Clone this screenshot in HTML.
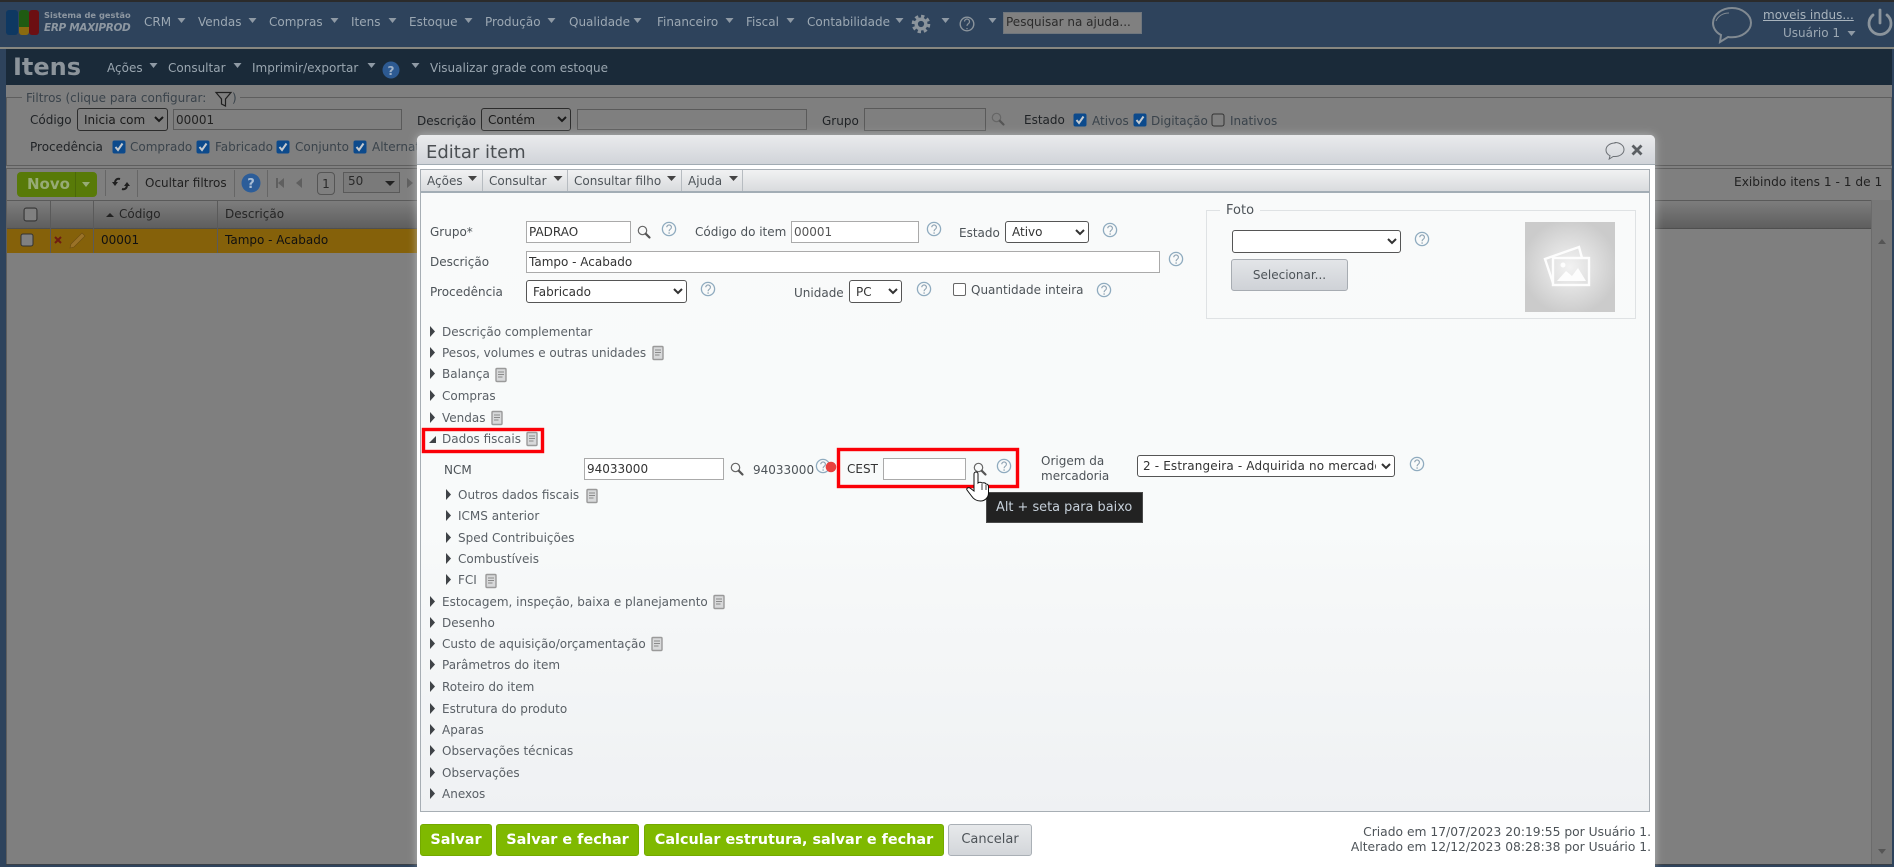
<!DOCTYPE html>
<html lang="pt"><head><meta charset="utf-8"><title>Itens</title>
<style>
html,body{margin:0;padding:0;width:1894px;height:867px;overflow:hidden;background:#2e435c}
*{box-sizing:border-box}
body{font:12px/16px "DejaVu Sans","Liberation Sans",sans-serif;color:#2a2a2a;position:relative}
.t{position:absolute;white-space:nowrap;line-height:16px}
.b{position:absolute}
.nav{color:#9ca8b3}
.tb{color:#9aa6b0}
.lab{color:#1f2225}
.dimc{color:#3a434b}
.m{color:#4d5358}
.tr{color:#5a6066}
svg{position:absolute;left:0;top:0;overflow:visible}
input,select{position:absolute;margin:0;font:12px "DejaVu Sans","Liberation Sans",sans-serif;color:#333;padding:0 2px}
input{background:#fff;border:1px solid #aaa;border-radius:0;outline:0}
select{background:#fff;border:1px solid #555;border-radius:3px;padding-left:2px}
.di{background:#7f7f7f;border:1px solid #5a5a5a;color:#222}
.ds{background:#7f7f7f;border:1px solid #2c2c2c;color:#1a1a1a}
.btn{position:absolute;top:824px;height:32px;background:#7fb900;border:1px solid #74a900;border-radius:3px;color:#fff;font:bold 14.400px/30px "DejaVu Sans",sans-serif;text-align:center;white-space:nowrap}
</style></head><body>
<svg width="0" height="0" style="position:absolute"><defs>
<symbol id="h" viewBox="-8 -8 16 16" overflow="visible"><circle r="6.6" fill="none" stroke="#8fabbf" stroke-width="1.3"/><path d="M-2.2-1.8a2.3 2.3 0 1 1 3.5 2C.5.8.1 1.100.1 2.200" fill="none" stroke="#8fa3b3" stroke-width="1.100"/><circle cx=".1" cy="4" r=".8" fill="#8fa3b3"/></symbol>
<symbol id="g" viewBox="-8 -8 16 16" overflow="visible"><circle cx="-1.500" cy="-1.500" r="4.200" fill="none" stroke="#666" stroke-width="1.200"/><path d="M1.800 1.800L5.500 5.500" stroke="#555" stroke-width="2.200" stroke-linecap="round"/></symbol>
<symbol id="n" viewBox="-6 -7 12 14" overflow="visible"><rect x="-5" y="-6.500" width="10" height="13" rx="1" fill="#d8d9da" stroke="#9a9a9a" stroke-width="1.400"/><path d="M-3-3H3M-3-.5H3M-3 2H1.500" stroke="#8a8a8a" stroke-width="1.100"/></symbol>
<symbol id="ck" viewBox="-7 -7 14 14" overflow="visible"><rect x="-6.500" y="-6.500" width="13" height="13" rx="2" fill="#0c4a8c"/><path d="M-3.500 0L-1 3L3.500-3.500" fill="none" stroke="#c4c9ce" stroke-width="2"/></symbol>
<symbol id="un" viewBox="-7 -7 14 14" overflow="visible"><rect x="-6" y="-6" width="12" height="12" rx="2" fill="#808080" stroke="#333" stroke-width="1"/></symbol>
</defs></svg>

<!-- NAV -->
<div class="b" style="left:0;top:0;width:1894px;height:2px;background:#2b2b2b"></div>
<div class="b" style="left:0;top:47px;width:1894px;height:2px;background:#878780"></div>
<div class="b" style="left:6px;top:10px;width:12px;height:25px;background:#0e3862;border-radius:3px"></div>
<div class="b" style="left:19px;top:10px;width:10px;height:17px;background:#1f5a12;border-radius:3px 3px 0 0"></div>
<div class="b" style="left:19px;top:27px;width:10px;height:8px;background:#8a6a10;border-radius:0 0 3px 3px"></div>
<div class="b" style="left:29px;top:10px;width:10px;height:25px;background:#6c0f12;border-radius:3px"></div>
<div class="t" style="left:44px;top:7px;font:bold 8.300px/16px 'DejaVu Sans',sans-serif;color:#8d97a1">Sistema de gestão</div>
<div class="t" style="left:44px;top:20px;font:italic bold 10.500px/16px 'DejaVu Sans',sans-serif;color:#8d97a1;letter-spacing:-.35px">ERP MAXIPROD</div>
<div class="t nav" style="left:144px;top:14px">CRM</div>
<div class="t nav" style="left:198px;top:14px">Vendas</div>
<div class="t nav" style="left:269px;top:14px">Compras</div>
<div class="t nav" style="left:351px;top:14px">Itens</div>
<div class="t nav" style="left:409px;top:14px">Estoque</div>
<div class="t nav" style="left:485px;top:14px">Produção</div>
<div class="t nav" style="left:569px;top:14px">Qualidade</div>
<div class="t nav" style="left:657px;top:14px">Financeiro</div>
<div class="t nav" style="left:746px;top:14px">Fiscal</div>
<div class="t nav" style="left:807px;top:14px">Contabilidade</div>
<div class="b" style="left:1003px;top:12px;width:139px;height:22px;background:#808080;border:1px solid #6f767d;color:#2b2b2b;padding-left:2px;line-height:19px;white-space:nowrap">Pesquisar na ajuda...</div>
<a class="t" style="left:1763px;top:7px;color:#a9b4bd;text-decoration:underline">moveis indus...</a>
<div class="t nav" style="left:1783px;top:25px">Usuário 1</div>

<!-- TITLE BAR -->
<div class="b" style="left:6px;top:49px;width:1886px;height:36px;background:#1a2a39"></div>
<div class="t" style="left:13px;top:55px;font:bold 24px/24px 'DejaVu Sans',sans-serif;color:#8c949b">Itens</div>
<div class="t tb" style="left:107px;top:60px">Ações</div>
<div class="t tb" style="left:168px;top:60px">Consultar</div>
<div class="t tb" style="left:252px;top:60px">Imprimir/exportar</div>
<div class="t tb" style="left:430px;top:60px">Visualizar grade com estoque</div>

<!-- CONTENT -->
<div class="b" style="left:6px;top:85px;width:1886px;height:779px;background:#7f7f7f"></div>
<div class="b" style="left:6px;top:864px;width:1886px;height:1px;background:#3a3f45"></div>
<div class="b" style="left:6px;top:97px;width:1886px;height:69px;border:1px solid #5e5e5e"></div>
<div class="b" style="left:22px;top:90px;width:218px;height:14px;background:#7f7f7f"></div>
<div class="t dimc" style="left:26px;top:90px">Filtros (clique para configurar:</div>
<div class="t dimc" style="left:232px;top:90px">)</div>
<div class="t lab" style="left:30px;top:112px">Código</div>
<select class="ds" style="left:77px;top:108px;width:91px;height:23px"><option>Inicia com</option></select>
<input class="di" style="left:173px;top:109px;width:229px;height:21px" value="00001">
<div class="t lab" style="left:417px;top:113px">Descrição</div>
<select class="ds" style="left:481px;top:108px;width:90px;height:23px"><option>Contém</option></select>
<input class="di" style="left:577px;top:109px;width:230px;height:21px">
<div class="t lab" style="left:822px;top:113px">Grupo</div>
<input class="di" style="left:864px;top:108px;width:122px;height:23px">
<div class="t lab" style="left:1024px;top:112px">Estado</div>
<div class="t dimc" style="left:1092px;top:113px">Ativos</div>
<div class="t dimc" style="left:1151px;top:113px">Digitação</div>
<div class="t dimc" style="left:1230px;top:113px">Inativos</div>
<div class="t lab" style="left:30px;top:139px">Procedência</div>
<div class="t dimc" style="left:130px;top:139px">Comprado</div>
<div class="t dimc" style="left:215px;top:139px">Fabricado</div>
<div class="t dimc" style="left:295px;top:139px">Conjunto</div>
<div class="t dimc" style="left:372px;top:139px">Alternativo</div>

<div class="b" style="left:6px;top:168px;width:1886px;height:696px;border:1px solid #5e5e5e;border-bottom:0"></div>
<div class="b" style="left:17px;top:172px;width:80px;height:25px;background:#587a08;border-radius:4px"></div>
<div class="b" style="left:75px;top:172px;width:1px;height:25px;background:#4b6808"></div>
<div class="t" style="left:27px;top:176px;font:bold 15px/16px 'DejaVu Sans',sans-serif;color:#97ab76">Novo</div>
<div class="b" style="left:105px;top:170px;width:1px;height:26px;background:#666"></div>
<div class="b" style="left:137px;top:170px;width:1px;height:27px;background:#666"></div>
<div class="b" style="left:234px;top:170px;width:1px;height:27px;background:#666"></div>
<div class="b" style="left:267px;top:170px;width:1px;height:27px;background:#666"></div>
<div class="t" style="left:145px;top:175px;color:#202020">Ocultar filtros</div>
<div class="b" style="left:317px;top:172px;width:18px;height:23px;border:1px solid #555;border-radius:4px;text-align:center;line-height:22px;font-size:12px">1</div>
<div class="b" style="left:343px;top:172px;width:57px;height:21px;border:1px solid #5a5a5a;background:#7a7a7a;line-height:17px;padding-left:4px">50</div>
<div class="t" style="left:1734px;top:174px;color:#222;font-size:12.200px">Exibindo itens 1 - 1 de 1</div>
<div class="b" style="left:7px;top:200px;width:1884px;height:29px;background:linear-gradient(#7d7d7d,#5e5e5e);border-top:1px solid #5a5a5a;border-bottom:1px solid #4f4f4f"></div>
<div class="b" style="left:7px;top:229px;width:500px;height:24px;background:#85610a"></div>
<div class="b" style="left:50px;top:200px;width:1px;height:53px;background:#5a5a5a"></div>
<div class="b" style="left:93px;top:200px;width:1px;height:53px;background:#5a5a5a"></div>
<div class="b" style="left:217px;top:200px;width:1px;height:53px;background:#5a5a5a"></div>
<div class="b" style="left:1871px;top:200px;width:21px;height:664px;background:#787878;border-left:1px solid #6b6b6b"></div>
<div class="t" style="left:119px;top:206px;color:#252525">Código</div>
<div class="t" style="left:225px;top:206px;color:#252525">Descrição</div>
<div class="t" style="left:101px;top:232px;color:#111">00001</div>
<div class="t" style="left:225px;top:232px;color:#111">Tampo - Acabado</div>

<!-- BACK ICONS -->
<svg width="1894" height="867">
<g fill="#8f9aa5"><path d="M177.500 18h8l-4 5zM248.500 18h8l-4 5zM330.500 18h8l-4 5zM388.500 18h8l-4 5zM464.500 18h8l-4 5zM547.500 18h8l-4 5zM633.500 18h8l-4 5zM725.500 18h8l-4 5zM786.500 18h8l-4 5zM895.500 18h8l-4 5zM941.500 18h8l-4 5zM988.500 18h8l-4 5zM1847.500 31h8l-4 5z"/>
<path d="M149.500 63h8l-4 5zM233.500 63h8l-4 5zM367.500 63h8l-4 5zM411.500 63h8l-4 5z"/></g>
<g fill="none" stroke="#8b949c"><circle cx="921" cy="24" r="7.800" stroke-width="3" stroke-dasharray="3.300 2.800"/><circle cx="921" cy="24" r="4.800" stroke-width="3.400"/><circle cx="967" cy="24" r="6.800" stroke-width="1.400"/></g>
<path d="M964.500 21.500a2.500 2.500 0 1 1 3.800 2.200c-.9.600-1.300 1-1.300 2.200M967 28v1.300" fill="none" stroke="#8b949c" stroke-width="1.200"/>
<path d="M1732 8c-10 0-19 6.500-19 15 0 5 3 9.500 8 12l-1 7 8-5c1.500.3 2.800.3 4 .3 10 0 19-6.500 19-14.500S1742 8 1732 8z" fill="none" stroke="#818a92" stroke-width="2"/>
<path d="M1716 21c2-5 7-8 13-8" fill="none" stroke="#818a92" stroke-width="1"/>
<path d="M1873 15a11 11 0 1 0 14 0M1880 10v13" fill="none" stroke="#8b949c" stroke-width="2.800" stroke-linecap="round"/>
<circle cx="391" cy="70" r="8.500" fill="#2d5a92"/><text x="391" y="75" text-anchor="middle" font-family="DejaVu Sans" font-weight="bold" font-size="12" fill="#9fb1c6">?</text>
<path d="M216 92.500h15l-5.500 6.500v7l-4-2v-5z" fill="none" stroke="#202020" stroke-width="1.200"/>
<use href="#g" x="990" y="111" width="16" height="16"/>
<use href="#ck" x="112" y="140" width="14" height="14"/><use href="#ck" x="196" y="140" width="14" height="14"/><use href="#ck" x="276" y="140" width="14" height="14"/><use href="#ck" x="353" y="140" width="14" height="14"/>
<use href="#ck" x="1073" y="113" width="14" height="14"/><use href="#ck" x="1133" y="113" width="14" height="14"/><use href="#un" x="1211" y="113" width="14" height="14"/>
<circle cx="251" cy="183" r="9.500" fill="#2c5d99"/><text x="251" y="188" text-anchor="middle" font-family="DejaVu Sans" font-weight="bold" font-size="13" fill="#a9bdd4">?</text>
<path d="M82 182h8l-4 5z" fill="#97ab76"/>
<path d="M115 183c0-3 2-5 5-4M127 185c0 3-2 5-5 4" fill="none" stroke="#1f1f1f" stroke-width="2"/><path d="M112 182h6l-3 4zM124 186h6l-3-4z" fill="#1f1f1f"/>
<g fill="#5f5f5f"><path d="M276 178h2v10h-2zM284 178v10l-6-5zM302 178v10l-6-5zM407 178v10l6-5z"/></g>
<path d="M385 181h10l-5 5z" fill="#222"/>
<use href="#un" x="23" y="207" width="15" height="15"/>
<use href="#un" x="20" y="233" width="14" height="14"/>
<path d="M106 217l4-4 4 4z" fill="#222"/>
<path d="M55 237l6 6M61 237l-6 6" stroke="#6f1c10" stroke-width="2"/>
<path d="M70 248l1-4 11-11 3 3-11 11z" fill="#9a7228" stroke="#6a4c10" stroke-width=".6"/>
<path d="M1878 244l4-5 4 5zM1878 849l4 5 4-5z" fill="#555"/>
</svg>

<!-- MODAL -->
<div class="b" style="left:417px;top:135px;width:1238px;height:732px;background:#fff;border-radius:5px 5px 0 0;box-shadow:0 0 9px rgba(215,218,220,.6)"></div>
<div class="b" style="left:417px;top:135px;width:1238px;height:30px;background:linear-gradient(#eaebed,#d1d4d9);border-bottom:1px solid #a2acb3;border-radius:5px 5px 0 0"></div>
<div class="t" style="left:426px;top:142px;font-size:18px;line-height:22px;color:#4b4f53">Editar item</div>
<div class="b" style="left:420px;top:169px;width:1230px;height:643px;border:1px solid #a7aeb4;background:linear-gradient(#f9fafa 0%,#f8fafa 55%,#eff1f3 100%)"></div>
<div class="b" style="left:421px;top:170px;width:1228px;height:23px;background:linear-gradient(#f1f2f3,#d9dbde);border-bottom:2px solid #a3adb5"></div>
<div class="b" style="left:482px;top:170px;width:1px;height:21px;background:#b7bcc1"></div>
<div class="b" style="left:567px;top:170px;width:1px;height:21px;background:#b7bcc1"></div>
<div class="b" style="left:681px;top:170px;width:1px;height:21px;background:#b7bcc1"></div>
<div class="b" style="left:742px;top:170px;width:1px;height:21px;background:#b7bcc1"></div>
<div class="t m" style="left:427px;top:173px">Ações</div>
<div class="t m" style="left:489px;top:173px">Consultar</div>
<div class="t m" style="left:574px;top:173px">Consultar filho</div>
<div class="t m" style="left:688px;top:173px">Ajuda</div>

<div class="t m" style="left:430px;top:224px">Grupo*</div>
<input style="left:526px;top:221px;width:105px;height:22px" value="PADRAO">
<div class="t m" style="left:695px;top:224px">Código do item</div>
<input style="left:791px;top:221px;width:128px;height:22px;color:#555" value="00001">
<div class="t m" style="left:959px;top:225px">Estado</div>
<select style="left:1005px;top:221px;width:84px;height:22px"><option>Ativo</option></select>
<div class="t m" style="left:430px;top:254px">Descrição</div>
<input style="left:526px;top:251px;width:634px;height:22px" value="Tampo - Acabado">
<div class="t m" style="left:430px;top:284px">Procedência</div>
<select style="left:526px;top:280px;width:161px;height:23px"><option>Fabricado</option></select>
<div class="t m" style="left:794px;top:285px">Unidade</div>
<select style="left:849px;top:280px;width:53px;height:23px"><option>PC</option></select>
<div class="b" style="left:953px;top:283px;width:13px;height:13px;border:1px solid #666;border-radius:2px;background:#fff"></div>
<div class="t m" style="left:971px;top:282px">Quantidade inteira</div>

<div class="b" style="left:1206px;top:210px;width:430px;height:109px;border:1px solid #dfe2e4"></div>
<div class="b" style="left:1220px;top:204px;width:40px;height:14px;background:#f9fafa"></div>
<div class="t m" style="left:1226px;top:203px;font-size:13px">Foto</div>
<select style="left:1232px;top:230px;width:169px;height:23px"><option></option></select>
<div class="b" style="left:1231px;top:259px;width:117px;height:32px;background:linear-gradient(#e3e5e8,#cfd2d7);border:1px solid #a7acb2;border-radius:3px;text-align:center;line-height:30px;color:#4d5358">Selecionar...</div>
<div class="b" style="left:1525px;top:222px;width:90px;height:90px;background:radial-gradient(circle at 50% 50%,#f2f2f2 0%,#dedede 40%,#cbcbcb 75%)"></div>

<!-- Tree -->
<div class="t tr" style="left:442px;top:324px">Descrição complementar</div>
<div class="t tr" style="left:442px;top:345px">Pesos, volumes e outras unidades</div>
<div class="t tr" style="left:442px;top:366px">Balança</div>
<div class="t tr" style="left:442px;top:388px">Compras</div>
<div class="t tr" style="left:442px;top:410px">Vendas</div>
<div class="t tr" style="left:442px;top:431px">Dados fiscais</div>
<div class="t m" style="left:444px;top:462px">NCM</div>
<input style="left:584px;top:458px;width:140px;height:22px" value="94033000">
<div class="t m" style="left:753px;top:462px">94033000</div>
<div class="t" style="left:847px;top:461px;color:#333">CEST</div>
<input style="left:883px;top:458px;width:83px;height:22px">
<div class="t m" style="left:1041px;top:453px">Origem da</div>
<div class="t m" style="left:1041px;top:468px">mercadoria</div>
<select style="left:1137px;top:455px;width:258px;height:22px;padding-left:1px;letter-spacing:.15px"><option>2 - Estrangeira - Adquirida no mercado interno</option></select>
<div class="t tr" style="left:458px;top:487px">Outros dados fiscais</div>
<div class="t tr" style="left:458px;top:508px">ICMS anterior</div>
<div class="t tr" style="left:458px;top:530px">Sped Contribuições</div>
<div class="t tr" style="left:458px;top:551px">Combustíveis</div>
<div class="t tr" style="left:458px;top:572px">FCI</div>
<div class="t tr" style="left:442px;top:594px">Estocagem, inspeção, baixa e planejamento</div>
<div class="t tr" style="left:442px;top:615px">Desenho</div>
<div class="t tr" style="left:442px;top:636px">Custo de aquisição/orçamentação</div>
<div class="t tr" style="left:442px;top:657px">Parâmetros do item</div>
<div class="t tr" style="left:442px;top:679px">Roteiro do item</div>
<div class="t tr" style="left:442px;top:701px">Estrutura do produto</div>
<div class="t tr" style="left:442px;top:722px">Aparas</div>
<div class="t tr" style="left:442px;top:743px">Observações técnicas</div>
<div class="t tr" style="left:442px;top:765px">Observações</div>
<div class="t tr" style="left:442px;top:786px">Anexos</div>

<div class="btn" style="left:420px;width:72px">Salvar</div>
<div class="btn" style="left:496px;width:143px">Salvar e fechar</div>
<div class="btn" style="left:644px;width:300px">Calcular estrutura, salvar e fechar</div>
<div class="btn" style="left:948px;width:84px;background:linear-gradient(#e7e9eb,#d3d6da);border-color:#aab0b6;color:#4d5358;font-weight:normal;font-size:13px">Cancelar</div>
<div class="t m" style="right:243px;top:824px;font-size:12.300px">Criado em 17/07/2023 20:19:55 por Usuário 1.</div>
<div class="t m" style="right:243px;top:839px;font-size:12.300px">Alterado em 12/12/2023 08:28:38 por Usuário 1.</div>

<div class="b" style="left:986px;top:492px;width:157px;height:31px;background:#222;border:1px solid #4a4a4a;color:#c6d0da;line-height:29px;padding-left:9px;white-space:nowrap;font-size:12.900px">Alt + seta para baixo</div>

<!-- MODAL ICONS -->
<svg width="1894" height="867">
<path d="M468 176h9l-4.500 5zM553.500 176h9l-4.500 5zM667 176h9l-4.500 5zM729 176h9l-4.500 5z" fill="#444"/>
<path d="M1615 143c-5 0-9 3-9 7 0 2.500 1.500 4.500 4 5.700l-.8 3.300 4-2.500h1.800c5 0 9-3 9-7s-4-7-9-7z" fill="none" stroke="#6c7075" stroke-width="1"/>
<path d="M1632.500 145.500l9 9M1641.500 145.500l-9 9" stroke="#5b5f63" stroke-width="2.800"/>
<use href="#g" x="636" y="224" width="16" height="16"/>
<use href="#h" x="661" y="221" width="16" height="16"/>
<use href="#h" x="926" y="221" width="16" height="16"/>
<use href="#h" x="1102" y="222" width="16" height="16"/>
<use href="#h" x="1168" y="251" width="16" height="16"/>
<use href="#h" x="700" y="281" width="16" height="16"/>
<use href="#h" x="916" y="281" width="16" height="16"/>
<use href="#h" x="1096" y="282" width="16" height="16"/>
<use href="#h" x="1414" y="231" width="16" height="16"/>
<use href="#h" x="815" y="458" width="16" height="16"/>
<circle cx="831" cy="467" r="5.300" fill="#e8413e"/>
<use href="#h" x="996" y="458" width="16" height="16"/>
<use href="#h" x="1409" y="456" width="16" height="16"/>
<use href="#g" x="729" y="461" width="16" height="16"/>
<use href="#g" x="972" y="461" width="16" height="16"/>
<g transform="translate(1570 267)" fill="none" stroke="#fff" stroke-width="2.400" opacity=".95">
<rect x="-17" y="-9" width="36" height="27"/>
<path d="M-17 16L-25-8l34-12 3 11"/>
<path d="M-13 14l9-10 6 5 6-8 8 13z" fill="#fff" stroke="none"/>
<circle cx="-7" cy="-2" r="2.500" fill="#fff" stroke="none"/>
</g>
<g fill="#3f4347"><path d="M430 326v11l5-5.500zM430 347v11l5-5.500zM430 368v11l5-5.500zM430 390v11l5-5.500zM430 412v11l5-5.500z"/>
<path d="M429 443l7-7v7z"/>
<path d="M446 489v11l5-5.500zM446 510v11l5-5.500zM446 532v11l5-5.500zM446 553v11l5-5.500zM446 574v11l5-5.500z"/>
<path d="M430 596v11l5-5.500zM430 617v11l5-5.500zM430 638v11l5-5.500zM430 659v11l5-5.500zM430 681v11l5-5.500zM430 703v11l5-5.500zM430 724v11l5-5.500zM430 745v11l5-5.500zM430 767v11l5-5.500zM430 788v11l5-5.500z"/></g>
<use href="#n" x="652" y="346" width="12" height="14"/>
<use href="#n" x="495" y="368" width="12" height="14"/>
<use href="#n" x="491" y="411" width="12" height="14"/>
<use href="#n" x="526" y="432" width="12" height="14"/>
<use href="#n" x="586" y="489" width="12" height="14"/>
<use href="#n" x="485" y="574" width="12" height="14"/>
<use href="#n" x="713" y="595" width="12" height="14"/>
<use href="#n" x="651" y="637" width="12" height="14"/>
<rect x="423.500" y="429.500" width="119" height="22" fill="none" stroke="#fb0007" stroke-width="3.400"/>
<rect x="838.500" y="449.500" width="179" height="37" fill="none" stroke="#fb0007" stroke-width="3.400"/>
<path d="M974 474a2 2 0 0 1 4 0v9c1-1 3-1 4 0 2-.5 3.500 0 4 1 1.500 0 2.500 1 2.500 3v6c0 4-3 8-8 8-4 0-7-2-9-5l-4.500-6c-1-1.500 1-3 3-2l4 3z" fill="#fff" stroke="#111" stroke-width="1"/>
<path d="M982 484v6M986 485v5" stroke="#111" stroke-width=".8"/>
</svg>
</body></html>
